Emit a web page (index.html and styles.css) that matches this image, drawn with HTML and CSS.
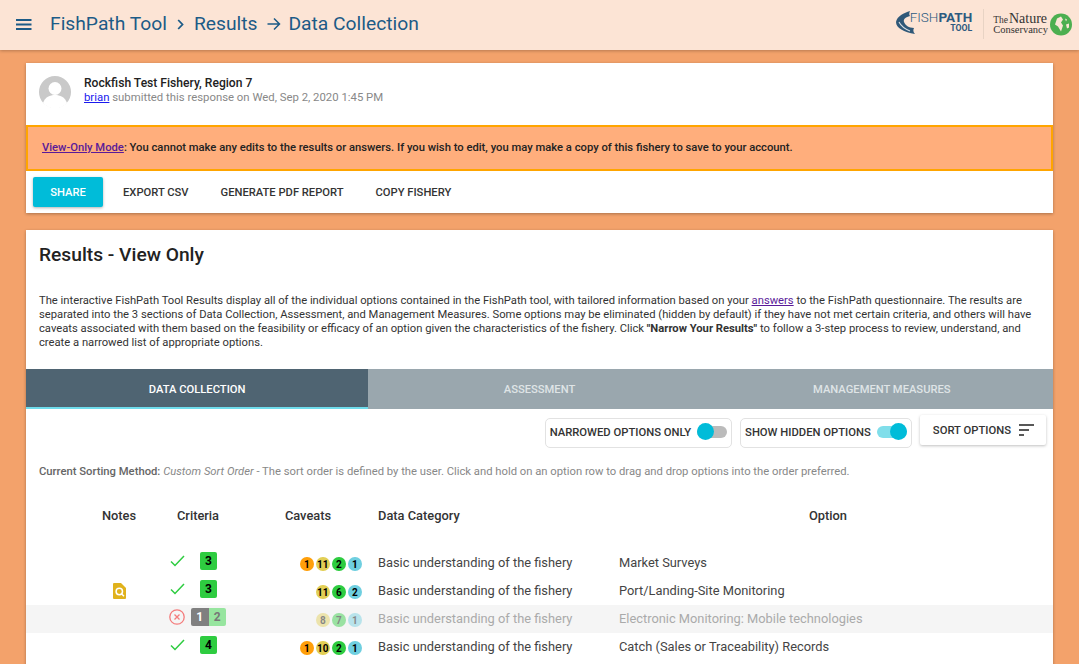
FILE: index.html
```html
<!DOCTYPE html>
<html lang="en">
<head>
<meta charset="utf-8">
<title>FishPath Tool</title>
<link rel="stylesheet" href="styles.css">
</head>
<body>
<header class="topbar">
  <svg class="menu-icon" width="16" height="11" viewBox="0 0 16 11"><path d="M0 1h15.500M0 5.500h15.500M0 10h15.500" stroke="#1c5b87" stroke-width="1.800"/></svg>
  <div class="crumbs">
    <span>FishPath Tool</span>
    <svg class="chev" width="7" height="11" viewBox="0 0 7 11"><path d="M1.200 1 5.500 5.500 1.200 10" fill="none" stroke="#1c5b87" stroke-width="1.800"/></svg>
    <span>Results</span>
    <svg class="arrow" width="14" height="14" viewBox="0 0 14 14"><path d="M0.500 7h12M7 1.500 12.500 7 7 12.500" fill="none" stroke="#1c5b87" stroke-width="1.500"/></svg>
    <span>Data Collection</span>
  </div>
  <div class="logos">
    <div class="fp-logo">
      <svg class="fish" width="20" height="23" viewBox="0 0 20 23"><path d="M14 0C8 2 1 5 0 11c0 6 8 10 19 12-2-2-2-4-1-6-5 0-9-3-10-6-1-3 2-5 6-6-1-1-1-3 0-5Z" fill="#2f5878"/><path d="M3 11c2 4 6 7 11 9" stroke="#d9dfe3" stroke-width="1.100" fill="none"/></svg>
      <div class="fp-text"><div class="fp-name"><span class="fp-light">FISH</span><b class="fp-bold">PATH</b></div><b class="fp-tool">TOOL</b></div>
    </div>
    <div class="logo-sep"></div>
    <div class="tnc-text"><div class="tnc-top"><span class="tnc-the">The</span><span class="tnc-nature">Nature</span></div><span>Conservancy</span></div>
    <svg class="globe" width="22" height="23" viewBox="0 0 22 22"><circle cx="11" cy="11" r="11" fill="#4caf50"/><path d="M7 5l4-2 2 3-2 3 2 3-2 6-3-5-3-2zM15 5l2 1-1 2zM16 11l3-1 0 4-2 1z" fill="#fbe6d6"/></svg>
  </div>
</header>

<main class="page">
  <section class="card summary">
    <div class="who">
      <svg class="avatar" width="32" height="32" viewBox="0 0 32 32"><circle cx="16" cy="16" r="16" fill="#c9c9c9"/><circle cx="16" cy="12.500" r="6.500" fill="#fff"/><path d="M4 27c2-6 7-8 12-8s10 2 12 8a16 16 0 0 1-24 0Z" fill="#fff"/></svg>
      <div class="who-text">
        <div class="who-title">Rockfish Test Fishery, Region 7</div>
        <div class="who-sub"><a class="user-link" href="#">brian</a> submitted this response on Wed, Sep 2, 2020 1:45 PM</div>
      </div>
    </div>
    <div class="notice"><span><a class="notice-link" href="#">View-Only Mode</a>: You cannot make any edits to the results or answers. If you wish to edit, you may make a copy of this fishery to save to your account.</span></div>
    <div class="actions">
      <button class="btn btn-primary">SHARE</button>
      <button class="btn">EXPORT CSV</button>
      <button class="btn">GENERATE PDF REPORT</button>
      <button class="btn">COPY FISHERY</button>
    </div>
  </section>

  <section class="card results">
    <h1 class="results-title">Results - View Only</h1>
    <p class="intro">The interactive FishPath Tool Results display all of the individual options contained in the FishPath tool, with tailored information based on your <a class="answers" href="#">answers</a> to the FishPath questionnaire. The results are separated into the 3 sections of Data Collection, Assessment, and Management Measures. Some options may be eliminated (hidden by default) if they have not met certain criteria, and others will have caveats associated with them based on the feasibility or efficacy of an option given the characteristics of the fishery. Click <b class="intro-strong">"Narrow Your Results"</b> to follow a 3-step process to review, understand, and create a narrowed list of appropriate options.</p>

    <div class="tabs">
      <div class="tab tab-active">DATA COLLECTION</div>
      <div class="tab">ASSESSMENT</div>
      <div class="tab">MANAGEMENT MEASURES</div>
    </div>

    <div class="controls">
      <div class="toggle-box"><span>NARROWED OPTIONS ONLY</span><span class="switch"><span class="knob"></span></span></div>
      <div class="toggle-box"><span>SHOW HIDDEN OPTIONS</span><span class="switch switch-on"><span class="knob"></span></span></div>
      <div class="sort-btn"><span>SORT OPTIONS</span><svg width="15" height="12" viewBox="0 0 15 12"><path d="M0 1h15M0 6h10M0 11h5" stroke="#222" stroke-width="1.600"/></svg></div>
    </div>

    <p class="sorting"><b>Current Sorting Method:</b> <i>Custom Sort Order</i> - The sort order is defined by the user. Click and hold on an option row to drag and drop options into the order preferred.</p>

    <div class="table">
      <div class="row head">
        <div class="c-notes">Notes</div>
        <div class="c-crit">Criteria</div>
        <div class="c-cav">Caveats</div>
        <div class="c-cat">Data Category</div>
        <div class="c-opt">Option</div>
      </div>

      <div class="row">
        <div class="c-notes"></div>
        <div class="c-crit"><span class="mark"><svg class="check" width="15" height="12" viewBox="0 0 15 12"><path d="M1 6.500 5 10.500 14 1" fill="none" stroke="#2ecc40" stroke-width="1.500"/></svg></span><span class="score-area"><span class="score s-green">3</span></span></div>
        <div class="c-cav"><span class="dot d-orange">1</span><span class="dot d-yellow">11</span><span class="dot d-green">2</span><span class="dot d-blue">1</span></div>
        <div class="c-cat">Basic understanding of the fishery</div>
        <div class="c-opt">Market Surveys</div>
      </div>

      <div class="row">
        <div class="c-notes"><svg class="note" width="13" height="16" viewBox="0 0 13 16"><path d="M1 0h7l5 5v10a1 1 0 0 1-1 1H1a1 1 0 0 1-1-1V1a1 1 0 0 1 1-1Z" fill="#e0b21c"/><circle cx="6.300" cy="8.500" r="3.200" fill="none" stroke="#fff" stroke-width="1.500"/><path d="m8.500 10.800 2.500 2.500" stroke="#fff" stroke-width="1.500"/></svg></div>
        <div class="c-crit"><span class="mark"><svg class="check" width="15" height="12" viewBox="0 0 15 12"><path d="M1 6.500 5 10.500 14 1" fill="none" stroke="#2ecc40" stroke-width="1.500"/></svg></span><span class="score-area"><span class="score s-green">3</span></span></div>
        <div class="c-cav"><span class="dot d-yellow">11</span><span class="dot d-green">6</span><span class="dot d-blue">2</span></div>
        <div class="c-cat">Basic understanding of the fishery</div>
        <div class="c-opt">Port/Landing-Site Monitoring</div>
      </div>

      <div class="row row-muted">
        <div class="c-notes"></div>
        <div class="c-crit"><span class="mark"><svg class="cross" width="16" height="16" viewBox="0 0 16 16"><circle cx="8" cy="8" r="7.200" fill="none" stroke="#f47c7c" stroke-width="1.300"/><path d="m5.500 5.500 5 5m0-5-5 5" stroke="#f47c7c" stroke-width="1.300"/></svg></span><span class="score-area"><span class="score s-grey">1</span><span class="score s-lgreen">2</span></span></div>
        <div class="c-cav muted-dots"><span class="dot d-yellow">8</span><span class="dot d-green">7</span><span class="dot d-blue">1</span></div>
        <div class="c-cat">Basic understanding of the fishery</div>
        <div class="c-opt">Electronic Monitoring: Mobile technologies</div>
      </div>

      <div class="row">
        <div class="c-notes"></div>
        <div class="c-crit"><span class="mark"><svg class="check" width="15" height="12" viewBox="0 0 15 12"><path d="M1 6.500 5 10.500 14 1" fill="none" stroke="#2ecc40" stroke-width="1.500"/></svg></span><span class="score-area"><span class="score s-green">4</span></span></div>
        <div class="c-cav"><span class="dot d-orange">1</span><span class="dot d-yellow">10</span><span class="dot d-green">2</span><span class="dot d-blue">1</span></div>
        <div class="c-cat">Basic understanding of the fishery</div>
        <div class="c-opt">Catch (Sales or Traceability) Records</div>
      </div>
    </div>
  </section>
</main>
</body>
</html>
```

FILE: styles.css
```css
* { box-sizing: border-box; }
html, body { margin: 0; height: 664px; overflow: hidden; }
body { background: #f3a26b; font-family: Roboto, "Liberation Sans", sans-serif; color: #222; }

.topbar { height: 50px; background: #fce4d5; display: flex; align-items: center; padding: 0 7px 2px 16px; box-shadow: 0 1px 3px rgba(0,0,0,.25); position: relative; }
.menu-icon { margin-right: 18px; }
.crumbs { display: flex; align-items: center; color: #1c5b87; font-size: 19.250px; margin-bottom: 2px; }
.chev { margin: 2px 10px 0 10px; }
.arrow { margin: 2px 7px 0 10px; }
.logos { margin-left: auto; display: flex; align-items: center; }
.fp-logo { display: flex; align-items: flex-start; color: #2c5a80; margin-bottom: 4px; }
.fish { margin-top: 1px; }
.fp-text { display: flex; flex-direction: column; align-items: flex-end; line-height: 1; margin-left: -6px; }
.fp-name { font-size: 13.500px; line-height: 14px; }
.fp-light { font-weight: 300; }
.fp-bold { font-weight: 700; }
.fp-tool { font-size: 8.700px; line-height: 9px; }
.logo-sep { width: 1px; height: 30px; background: #e8d3c4; margin: 0 9px 0 11px; }
.tnc-text { display: flex; flex-direction: column; font-family: "Liberation Serif", serif; font-size: 10.500px; line-height: 10px; color: #333; }
.tnc-top { display: flex; align-items: baseline; gap: 1px; }
.tnc-the { font-size: 9.500px; }
.tnc-nature { font-size: 14px; line-height: 12px; }
.globe { margin-left: 2px; }

.page { padding: 13px 26px 0; }
.card { background: #fff; box-shadow: 0 1px 3px rgba(0,0,0,.3); }
.summary { height: 150px; display: flex; flex-direction: column; margin-bottom: 17px; }
.who { height: 62px; display: flex; align-items: flex-start; padding: 13px 13px 0; gap: 13px; }
.who-text { font-size: 11.350px; line-height: 14px; }
.who-title { font-size: 12.100px; font-weight: 500; }
.who-sub { color: #888; }
.user-link { color: #1a1aee; }
.notice { height: 46px; border: 2px solid #ffa500; background: #ffae7c; font-size: 11.220px; font-weight: 500; padding: 0 0 1px 14px; display: flex; align-items: center; color: #222; }
.notice-link { color: #5a1a99; }
.actions { flex: 1; display: flex; align-items: center; padding-left: 7px; }
.btn { height: 30px; border: 0; background: none; font: 500 11.200px Roboto, sans-serif; color: #333; padding: 0 16px; }
.btn-primary { background: #00bcd9; color: #fff; border-radius: 2px; box-shadow: 0 1px 3px rgba(0,0,0,.3); width: 70px; padding: 0; margin-right: 4px; }

.results { height: 440px; }
.results-title { margin: 0; padding: 13px 13px 0; font-size: 19.200px; line-height: 24px; font-weight: 500; height: 64px; }
.intro { margin: 0; padding: 0 13px; font-size: 11.220px; line-height: 14px; height: 75px; color: #333; }
.intro-strong { font-weight: 700; }
.answers { color: #5a1a99; }
.tabs { display: flex; height: 40px; background: #9aa7ae; }
.tab { flex: 1; display: flex; align-items: center; justify-content: center; padding-top: 1px; color: #dfe4e6; font-size: 11.200px; font-weight: 500; }
.tab-active { background: #4f6472; color: #fff; border-bottom: 2px solid #6fdcec; padding-top: 3px; }

.controls { display: flex; justify-content: flex-end; align-items: flex-start; gap: 8px; padding-right: 7px; height: 45px; }
.toggle-box { height: 30px; margin-top: 9px; border: 1px solid #e2e2e2; border-radius: 5px; display: flex; align-items: center; padding: 0 4px 2px; gap: 6px; font-size: 11.250px; font-weight: 500; color: #333; }
.switch { width: 30px; height: 12px; background: #bbb; border-radius: 6px; position: relative; }
.knob { position: absolute; left: 0; top: -3px; width: 17px; height: 17px; border-radius: 50%; background: #00bcd9; }
.switch-on { background: #80deea; }
.switch-on .knob { left: auto; right: 0; }
.sort-btn { height: 30px; margin-top: 6px; display: flex; align-items: center; gap: 8px; padding: 0 12px 0 13px; font-size: 11.250px; font-weight: 500; color: #333; box-shadow: 0 1px 3px rgba(0,0,0,.25); border-radius: 2px; }

.sorting { margin: 0; padding: 11px 13px 0; font-size: 11.250px; line-height: 14px; color: #888; height: 37px; }
.sorting b { font-weight: 500; color: #666; }

.table { font-size: 12.850px; color: #444; }
.row { display: flex; align-items: center; height: 28px; padding-right: 16px; }
.head { height: 48px; margin-bottom: 10px; color: #333; font-weight: 500; }
.c-notes { width: 122px; padding-left: 64px; display: flex; justify-content: center; flex: none; }
.c-crit { width: 100px; flex: none; display: flex; align-items: center; padding-left: 21px; margin-bottom: 4px; }
.head .c-crit { padding-left: 0; justify-content: center; margin-bottom: 0; }
.mark { width: 22px; flex: none; display: flex; }
.check { margin-left: 1px; }
.score-area { width: 35px; flex: none; display: flex; justify-content: center; }
.c-cav { width: 122px; flex: none; display: flex; justify-content: flex-end; gap: 2.500px; padding-right: 8.500px; }
.head .c-cav { justify-content: center; padding-right: 2px; }
.c-cat { width: 241px; flex: none; margin-left: 8px; margin-bottom: 2px; }
.c-opt { flex: 1; margin-bottom: 2px; }
.head .c-cat, .head .c-opt { margin-bottom: 0; }
.head .c-opt { text-align: center; }
.score { width: 17.500px; height: 18px; border-radius: 2px; display: inline-flex; align-items: center; justify-content: center; font-size: 12px; font-weight: 700; color: #000; }
.s-green { background: #2ecc40; }
.s-grey { background: #808080; color: #fff; border-radius: 2px 0 0 2px; }
.s-lgreen { background: #97e59f; color: #777; border-radius: 0 2px 2px 0; }
.dot { width: 13.500px; height: 14px; border-radius: 50%; display: inline-flex; align-items: center; justify-content: center; font-size: 10px; font-weight: 700; color: #000; margin-top: 2px; }
.d-orange { background: #ff9f0a; }
.d-yellow { background: #e2cf55; }
.d-green { background: #2ecc40; }
.d-blue { background: #6fcfe0; }
.row-muted { background: #f5f5f5; color: #aaa; }
.muted-dots .dot { opacity: .45; }
```
